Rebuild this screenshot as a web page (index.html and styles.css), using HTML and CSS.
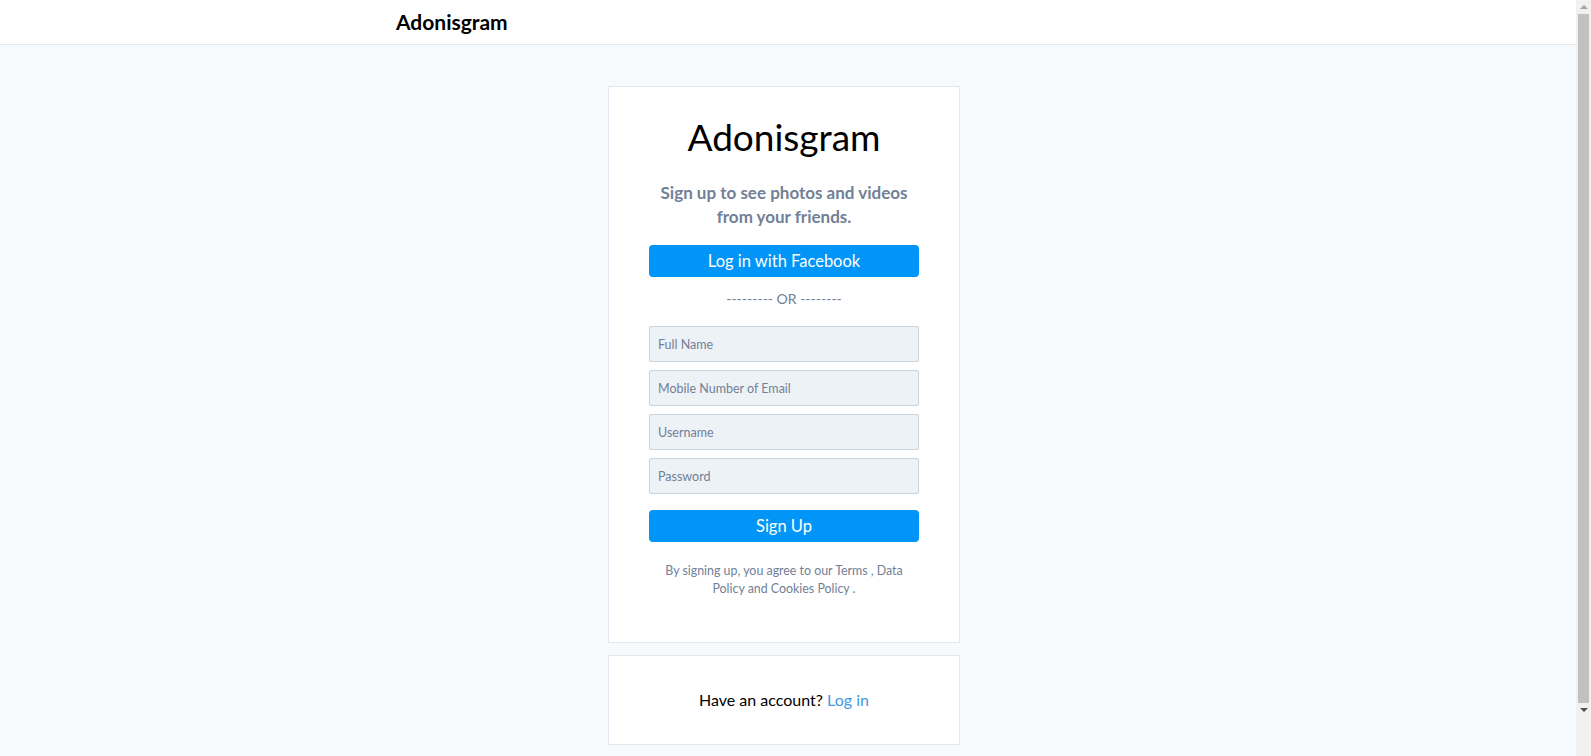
FILE: index.html
```html
<!DOCTYPE html>
<html lang="en">
<head>
<meta charset="utf-8">
<title>Adonisgram</title>
<link rel="stylesheet" href="styles.css">
</head>
<body>
<header class="topbar">
  <div class="topbar-inner">
    <a class="brand" href="#">Adonisgram</a>
  </div>
</header>
<main class="page">
  <section class="card signup">
    <h1 class="logo">Adonisgram</h1>
    <p class="tagline">Sign up to see photos and videos from your friends.</p>
    <button class="btn" type="button">Log in with Facebook</button>
    <div class="or">--------- OR --------</div>
    <form class="form">
      <input class="field" type="text" placeholder="Full Name">
      <input class="field" type="text" placeholder="Mobile Number of Email">
      <input class="field" type="text" placeholder="Username">
      <input class="field" type="password" placeholder="Password">
      <button class="btn btn-submit" type="button">Sign Up</button>
    </form>
    <p class="terms">By signing up, you agree to our Terms , Data Policy and Cookies Policy .</p>
  </section>
  <section class="card login-box">
    <p class="have">Have an account? <a class="link" href="#">Log in</a></p>
  </section>
</main>
<div class="scrollbar" aria-hidden="true">
  <span class="sb-arrow sb-up"></span>
  <span class="sb-thumb"></span>
  <span class="sb-arrow sb-down"></span>
</div>
</body>
</html>
```
FILE: styles.css
```css
* { box-sizing: border-box; }
html, body { margin: 0; padding: 0; }
body {
  background: #f7fafc;
  font-family: Lato, "Noto Sans", sans-serif;
  color: #000;
  overflow: hidden;
}
.topbar {
  background: #fff;
  border-bottom: 1px solid #e2e8f0;
  height: 45px;
}
.topbar-inner {
  padding-right: 23px;
  display: flex;
  justify-content: center;
}
.brand {
  width: 776px;
  display: block;
  font-size: 21px;
  font-weight: 700;
  line-height: 44px;
  color: #000;
  text-decoration: none;
}
.page {
  display: flex;
  flex-direction: column;
  align-items: center;
  padding: 41px 23px 45px 0;
  gap: 12px;
}
.card {
  width: 352px;
  background: #fff;
  border: 1px solid #e2e8f0;
}
.signup {
  padding: 23px 40px 44px;
  display: flex;
  flex-direction: column;
  text-align: center;
}
.logo {
  margin: 0 0 17px;
  font-size: 37px;
  line-height: 54px;
  font-weight: 400;
}
.tagline {
  margin: 0 0 16px;
  font-size: 17px;
  line-height: 24px;
  font-weight: 700;
  color: #718096;
}
.btn {
  display: block;
  width: 100%;
  height: 32px;
  border: 0;
  border-radius: 4px;
  background: #0095f6;
  color: #fff;
  font-family: inherit;
  font-size: 16.5px;
  padding: 0;
}
.or {
  margin: 11px 0 17px;
  font-size: 14px;
  line-height: 21px;
  color: #718096;
}
.form {
  display: flex;
  flex-direction: column;
  gap: 8px;
}
.field {
  height: 36px;
  width: 100%;
  background: #edf2f7;
  border: 1px solid #cbd5e0;
  border-radius: 2px;
  padding: 0 8px;
  font-family: inherit;
  font-size: 12.5px;
  color: #4a5568;
}
.field::placeholder { color: #718096; }
.btn-submit { margin-top: 8px; }
.terms {
  margin: 20px 0 0;
  padding: 0 2px;
  font-size: 12.4px;
  line-height: 18px;
  color: #718096;
}
.login-box {
  padding: 32px 0;
  text-align: center;
}
.have {
  margin: 0;
  font-size: 16px;
  line-height: 24px;
}
.link {
  color: #4299e1;
  text-decoration: none;
}
.scrollbar {
  position: fixed;
  top: 0;
  right: 0;
  width: 15px;
  height: 100vh;
  background: #f1f1f1;
  display: flex;
  flex-direction: column;
  align-items: center;
}
.sb-arrow {
  flex: 0 0 14px;
  width: 15px;
  display: flex;
  align-items: center;
  justify-content: center;
}
.sb-up::before {
  content: "";
  border-left: 4px solid transparent;
  border-right: 4px solid transparent;
  border-bottom: 4px solid #a3a3a3;
}
.sb-down::before {
  content: "";
  border-left: 4px solid transparent;
  border-right: 4px solid transparent;
  border-top: 4px solid #505050;
}
.sb-thumb {
  width: 11px;
  height: 689px;
  background: #c1c1c1;
}
```
